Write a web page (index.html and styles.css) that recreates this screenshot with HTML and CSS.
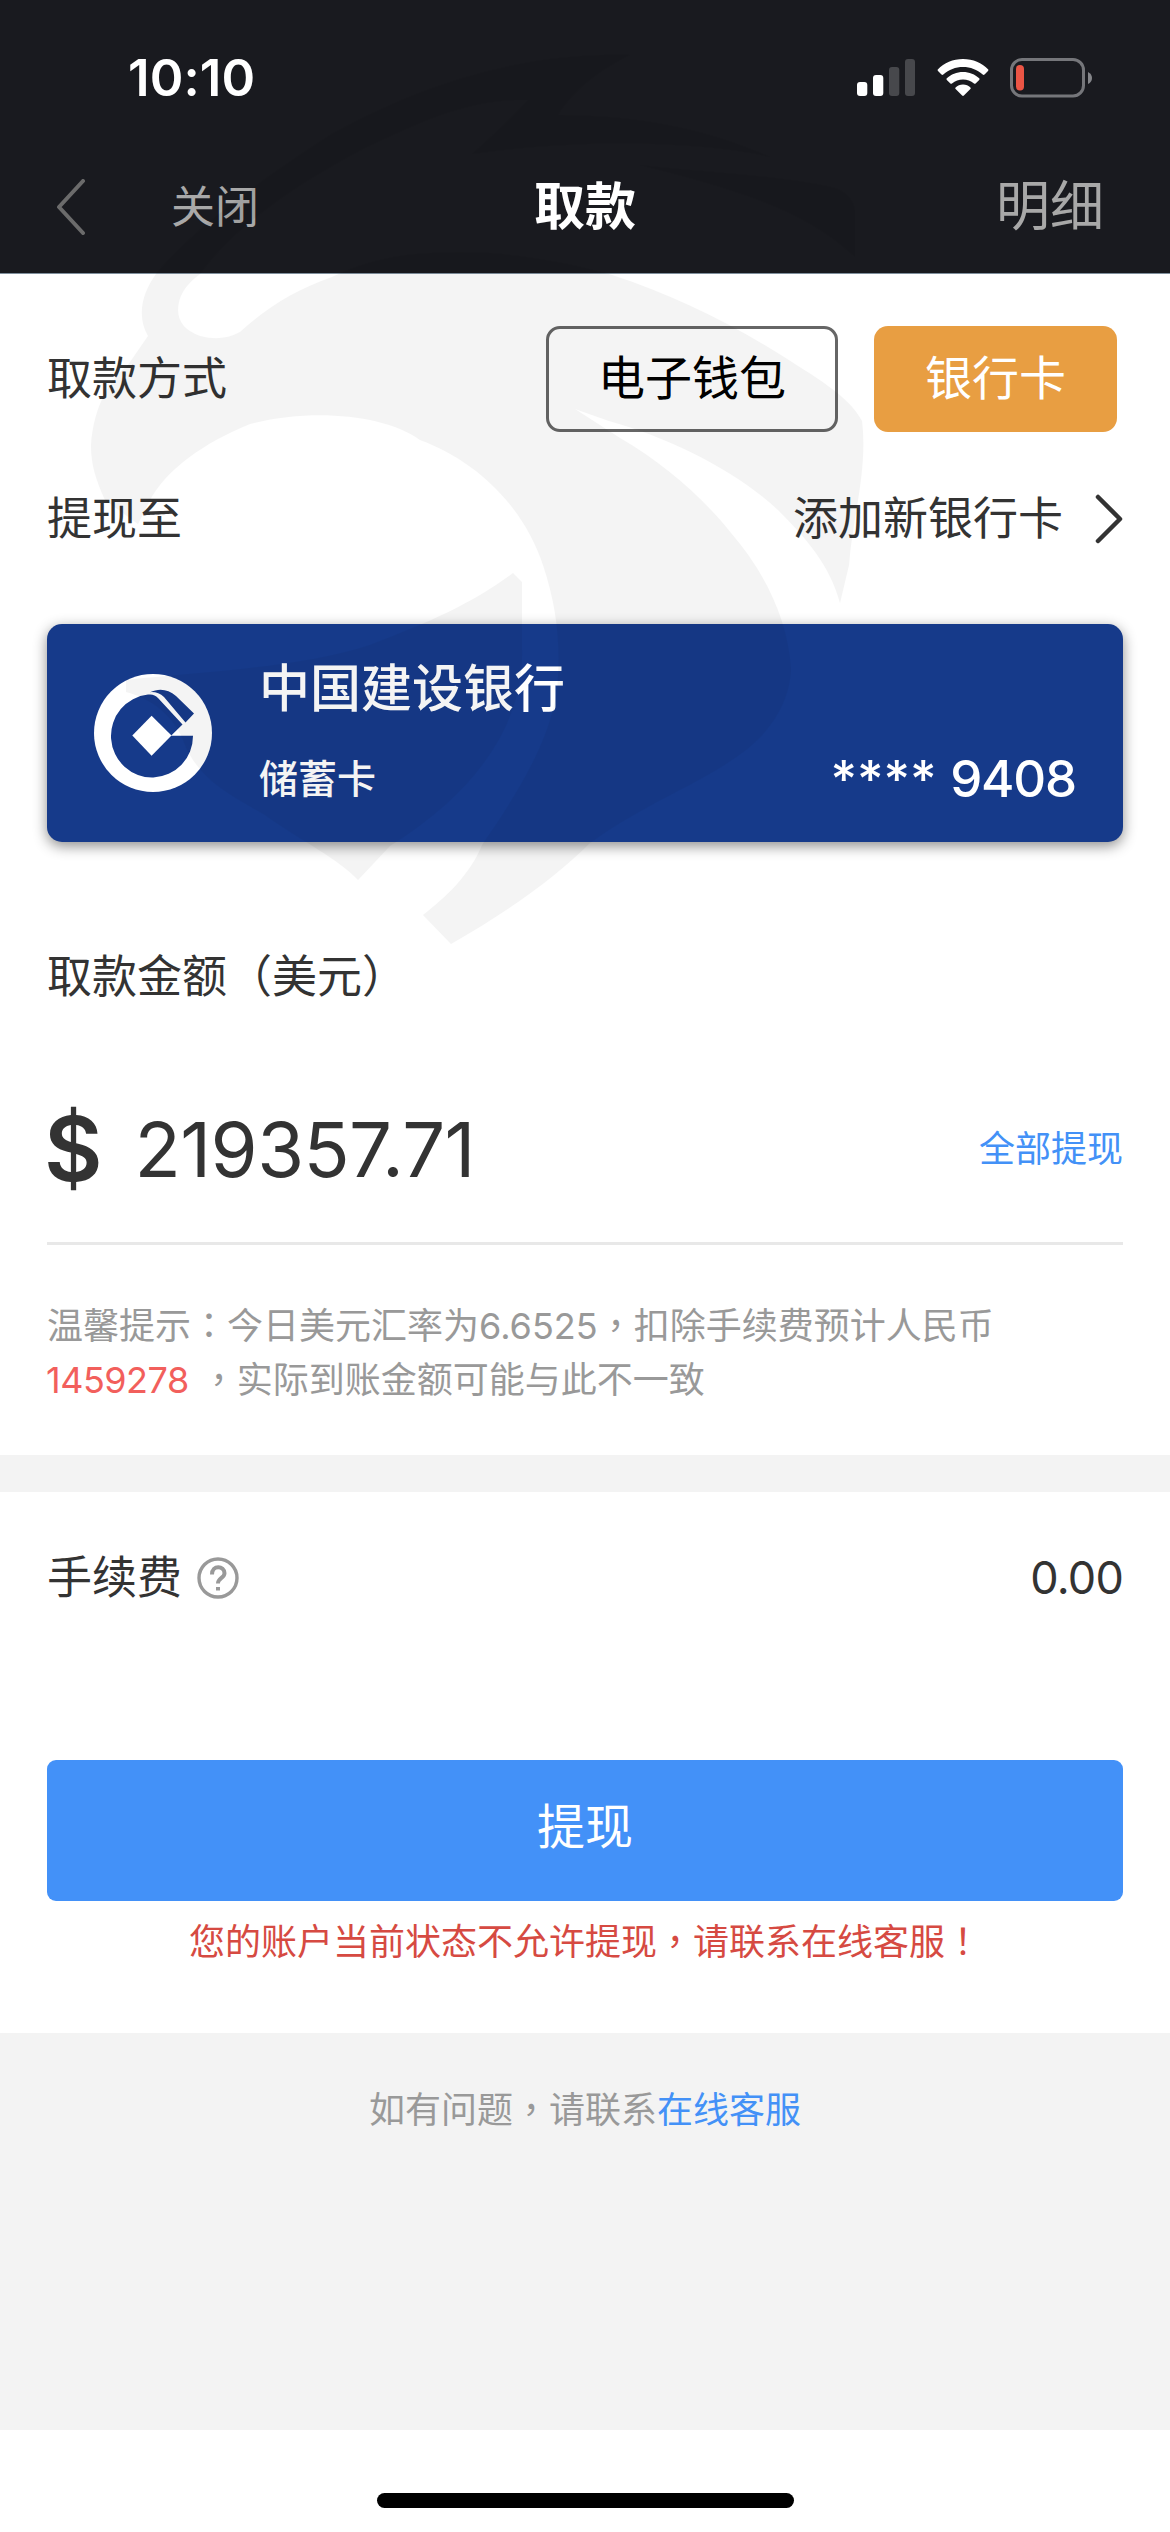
FILE: index.html
```html
<!DOCTYPE html>
<html lang="zh">
<head>
<meta charset="utf-8">
<title>取款</title>
<link rel="stylesheet" href="styles.css">
</head>
<body>
<div class="screen">
  <header class="header">
    <div class="status">
      <span class="clock">10:10</span>
      <div class="indicators">
        <svg class="signal" width="58" height="38" viewBox="0 0 58 38">
          <rect x="0" y="23" width="10.300" height="14" rx="3" fill="#fff"/>
          <rect x="16" y="16" width="10.300" height="21" rx="3" fill="#fff"/>
          <rect x="32" y="8" width="10.300" height="29" rx="3" fill="#47484c"/>
          <rect x="48" y="0" width="10" height="37" rx="3" fill="#47484c"/>
        </svg>
        <svg class="wifi" width="52" height="38" viewBox="0 0 52 38" fill="#fff">
          <path d="M26 0C36 0 45 4 51 10.200Q52 11 51 12L47.500 15.500Q46.600 16.300 45.700 15.500C40 10.500 33.500 8 26 8S12 10.500 6.300 15.500Q5.400 16.300 4.500 15.500L1 12Q0 11 1 10.200C7 4 16 0 26 0Z"/>
          <path d="M26 13C32.300 13 38 15.400 42.200 19.300Q43 20.100 42.200 21L38.600 24.500Q37.800 25.200 37 24.500C33.800 21.900 30.200 20.500 26 20.500S18.200 21.900 15 24.500Q14.200 25.200 13.400 24.500L9.800 21Q9 20.100 9.800 19.300C14 15.400 19.700 13 26 13Z"/>
          <path d="M26 25.500C29 25.500 31.500 26.600 33.400 28.400Q34.200 29.200 33.400 30.100L26.900 36.600Q26 37.400 25.100 36.600L18.600 30.100Q17.800 29.200 18.600 28.400C20.500 26.600 23 25.500 26 25.500Z"/>
        </svg>
        <svg class="battery" width="84" height="40" viewBox="0 0 84 40">
          <rect x="1.500" y="1.500" width="72" height="36.500" rx="10.500" fill="none" stroke="#75767a" stroke-width="3"/>
          <rect x="6" y="7" width="8" height="25.500" rx="4" fill="#eb5545"/>
          <path d="M78 14Q82 16 82 20T78 26Z" fill="#85868a"/>
        </svg>
      </div>
    </div>
    <nav class="nav">
      <div class="nav-left">
        <svg width="30" height="56" viewBox="0 0 30 56" fill="none" stroke="#6b6b6b" stroke-width="4" stroke-linecap="round" stroke-linejoin="round"><path d="M27 2L3 28L27 54"/></svg>
        <span class="close">关闭</span>
      </div>
      <h1 class="title">取款</h1>
      <span class="detail">明细</span>
    </nav>
  </header>

  <main>
    <section class="panel withdraw">
      <div class="row method">
        <span>取款方式</span>
        <div class="options">
          <button class="option wallet">电子钱包</button>
          <button class="option bank">银行卡</button>
        </div>
      </div>
      <div class="row target">
        <span>提现至</span>
        <div class="add">
          <span>添加新银行卡</span>
          <svg width="28" height="50" viewBox="0 0 28 50" fill="none" stroke="#333" stroke-width="4.500" stroke-linecap="round" stroke-linejoin="round"><path d="M3 3L25 25L3 47"/></svg>
        </div>
      </div>
      <div class="card">
        <svg class="logo" width="118" height="118" viewBox="94 674 118 118">
          <circle cx="153" cy="733" r="59" fill="#fff"/>
          <path d="M171 735.800H193A41 41.500 0 1 1 148 694.600Q154 693.500 158 698L182.500 724.500Z" fill="#163a8a"/>
          <path d="M150 692.200C159 688 168 689 176 696L194 713.500L185.500 722.500L164 697Q158 691.500 150 692.200Z" fill="#163a8a"/>
          <path d="M132.300 735.500L151.600 715.800L171.500 735.500L151.600 755.800Z" fill="#fff"/>
        </svg>
        <div class="card-info">
          <div class="bank-name">中国建设银行</div>
          <div class="card-line">
            <span class="card-type">储蓄卡</span>
            <span class="card-number">**** <span class="digits">9408</span></span>
          </div>
        </div>
      </div>
      <div class="amount-title">取款金额（美元）</div>
      <div class="amount">
        <span class="currency">$</span>
        <span class="value">219357.71</span>
        <a class="all">全部提现</a>
      </div>
      <p class="hint">温馨提示<span lang="zh-TW">：</span>今日美元汇率为6.6525<span lang="zh-TW">，</span>扣除手续费预计人民币<br><span class="cny">1459278</span><span lang="zh-TW">，</span>实际到账金额可能与此不一致</p>
    </section>

    <section class="panel confirm">
      <div class="row fee">
        <div class="fee-label">
          <span>手续费</span>
          <svg width="42" height="42" viewBox="0 0 42 42" fill="none" stroke="#999" stroke-width="3.400"><circle cx="21" cy="21" r="19"/><path d="M15 17.500C15 7.500 27.500 8.500 27.500 16.300C27.500 21 21 21 21 26.500" stroke-width="4"/><path d="M21 30V33.500" stroke-width="4"/></svg>
        </div>
        <span class="fee-value">0.00</span>
      </div>
      <button class="submit">提现</button>
      <p class="error">您的账户当前状态不允许提现<span lang="zh-TW">，</span>请联系在线客服<span lang="zh-TW">！</span></p>
    </section>

    <p class="help">如有问题<span lang="zh-TW">，</span>请联系<a>在线客服</a></p>
  </main>

  <div class="home"><span class="home-bar"></span></div>

  <svg class="watermark" width="900" height="960" viewBox="0 0 900 960">
    <path d="M156 274C190 232 260 180 330 135C420 85 520 52 630 55C600 70 575 88 558 115C640 115 710 130 770 157C715 144 600 136 472 154C490 138 510 120 528 100C470 98 420 122 365 148C300 182 235 225 200 274Q178 290 178 310Q178 328 200 336Q222 342 240 332C268 307 295 290 332 277C380 254 425 250 490 253C530 256 575 264 612 275C670 294 725 320 776 352C815 377 848 395 862 421C868 470 852 520 849 565L840 603C830 565 806 538 778 510C735 470 670 438 609 421L575 409L620 438C665 464 705 500 731 533C765 572 788 620 791 669C790 700 772 730 746 750C700 785 650 800 590 843C555 878 510 910 451 944L423 915C445 898 470 875 482 845C520 790 550 740 557 690C561 650 558 610 543 565C525 510 480 462 420 440C385 414 310 408 250 424C205 442 165 470 149 502L138 524L105 500C96 480 91 465 91 445C94 405 110 380 128 365L148 336C136 315 143 292 156 274Z"/>
    <path d="M513 573L522 582V650C524 720 480 790 390 846L358 880C340 860 300 840 265 815C230 795 200 780 185 745C175 715 150 698 126 692V680C200 672 300 668 370 645C430 622 475 602 513 573Z"/>
    <path d="M640 165C710 173 780 175 835 188Q852 194 855 210V257C800 205 720 186 640 165Z"/>
  </svg>
</div>
</body>
</html>
```
FILE: styles.css
```css
* { box-sizing: border-box; }
body, h1, p { margin: 0; }
body {
  background: #f3f3f3;
  color: #333;
  font-family: Inter, "Noto Sans CJK SC", sans-serif;
  font-size: 45px;
  line-height: 54px;
}
/* Traditional Chinese faces centre the punctuation in its square */
[lang="zh-TW"] { font-family: "Noto Sans CJK TC", sans-serif; line-height: 1; }
button {
  padding: 0;
  border: 0;
  font: inherit;
}
svg { display: block; flex: none; }

.screen {
  position: relative;
  display: flex;
  flex-direction: column;
  width: 1170px;
  height: 2532px;
  overflow: hidden;
}

/* Header */
.header {
  height: 274px;
  background: #191a1f;
  border-bottom: 1px solid #7f8f9c;
}
.status {
  display: flex;
  align-items: center;
  justify-content: space-between;
  height: 140px;
  padding: 16px 76px 0 128px;
}
.clock {
  color: #fff;
  font-size: 51px;
  font-weight: 600;
  letter-spacing: 0.1px;
}
.indicators {
  display: flex;
  align-items: center;
}
.wifi { margin-left: 22px; }
.battery { margin-left: 21px; }
.nav {
  display: grid;
  grid-template-columns: 1fr auto 1fr;
  align-items: center;
  height: 133px;
  padding: 0 66px;
  color: #a8a8a8;
}
.nav-left {
  display: flex;
  align-items: center;
  gap: 85px;
  margin-left: -10px;
}
.close { font-size: 44px; }
.title {
  color: #fff;
  font-size: 51px;
  font-weight: 600;
}
.detail {
  justify-self: end;
  font-size: 54px;
}

/* Withdrawal panel */
.panel {
  padding: 0 47px;
  background: #fff;
}
.withdraw { height: 1181px; }
.row {
  display: flex;
  align-items: center;
  justify-content: space-between;
}
.method { padding: 52px 6px 0 0; }
.options {
  display: flex;
  gap: 36px;
}
.option {
  height: 106px;
  padding-bottom: 2px;
  border-radius: 14px;
  font-size: 47px;
}
.wallet {
  width: 292px;
  border: 3px solid #666;
  background: #fff;
  color: #000;
}
.bank {
  width: 243px;
  background: #e89e42;
  color: #fff;
}
.method > span { line-height: 106px; }
.target {
  height: 54px;
  margin-top: 60px;
}
.add {
  display: flex;
  align-items: center;
  gap: 32px;
}
.card {
  display: flex;
  align-items: center;
  gap: 47px;
  height: 218px;
  margin-top: 78px;
  padding: 0 47px;
  border-radius: 15px;
  background: #163a8a;
  box-shadow: 0 4px 14px rgba(0, 0, 0, 0.45);
  color: #fff;
  font-weight: 500;
}
.card-info {
  flex: 1;
  padding-top: 6px;
}
.bank-name {
  height: 62px;
  font-size: 51px;
}
.card-line {
  display: flex;
  align-items: center;
  justify-content: space-between;
  height: 62px;
  margin-top: 24px;
}
.card-type { font-size: 39px; }
.card-number { font-size: 51px; }
.digits { letter-spacing: -1.2px; }
.amount-title { margin-top: 108px; }
.amount {
  display: flex;
  align-items: center;
  height: 141px;
  margin-top: 100px;
  padding-bottom: 48px;
  border-bottom: 3px solid #e8e8e8;
}
.currency {
  margin-left: -3px;
  font-size: 90px;
  font-weight: 600;
}
.value {
  margin-left: 32px;
  font-size: 76px;
  letter-spacing: -0.6px;
}
.all {
  margin-left: auto;
  color: #4391f7;
  font-size: 36px;
}
.hint {
  margin-top: 54px;
  color: #999;
  font-size: 36px;
}
.cny {
  margin-left: -1px;
  margin-right: 12px;
  color: #f25f5c;
  letter-spacing: -0.5px;
}

/* Fee and confirmation */
.confirm {
  height: 541px;
  margin-top: 37px;
  padding-top: 59px;
}
.fee { height: 54px; }
.fee-label {
  display: flex;
  align-items: center;
  gap: 15px;
}
.fee-value { letter-spacing: -0.8px; }
.submit {
  display: block;
  width: 100%;
  height: 141px;
  margin-top: 155px;
  padding-bottom: 7px;
  border-radius: 9px;
  background: #4391f8;
  color: #fff;
  font-size: 48px;
}
.error {
  margin-top: 14px;
  color: #d64a42;
  font-size: 36px;
  text-align: center;
}
.help {
  margin-top: 50px;
  color: #999;
  font-size: 36px;
  text-align: center;
}
.help a { color: #4391f7; }

.home {
  display: flex;
  justify-content: center;
  height: 102px;
  margin-top: auto;
  padding-top: 63px;
  background: #fff;
}
.home-bar {
  width: 417px;
  height: 15px;
  border-radius: 8px;
  background: #000;
}

/* Faint brand mark laid over the whole page */
.watermark {
  position: absolute;
  top: 0;
  left: 0;
  fill: #000;
  opacity: 0.038;
  pointer-events: none;
}
```
